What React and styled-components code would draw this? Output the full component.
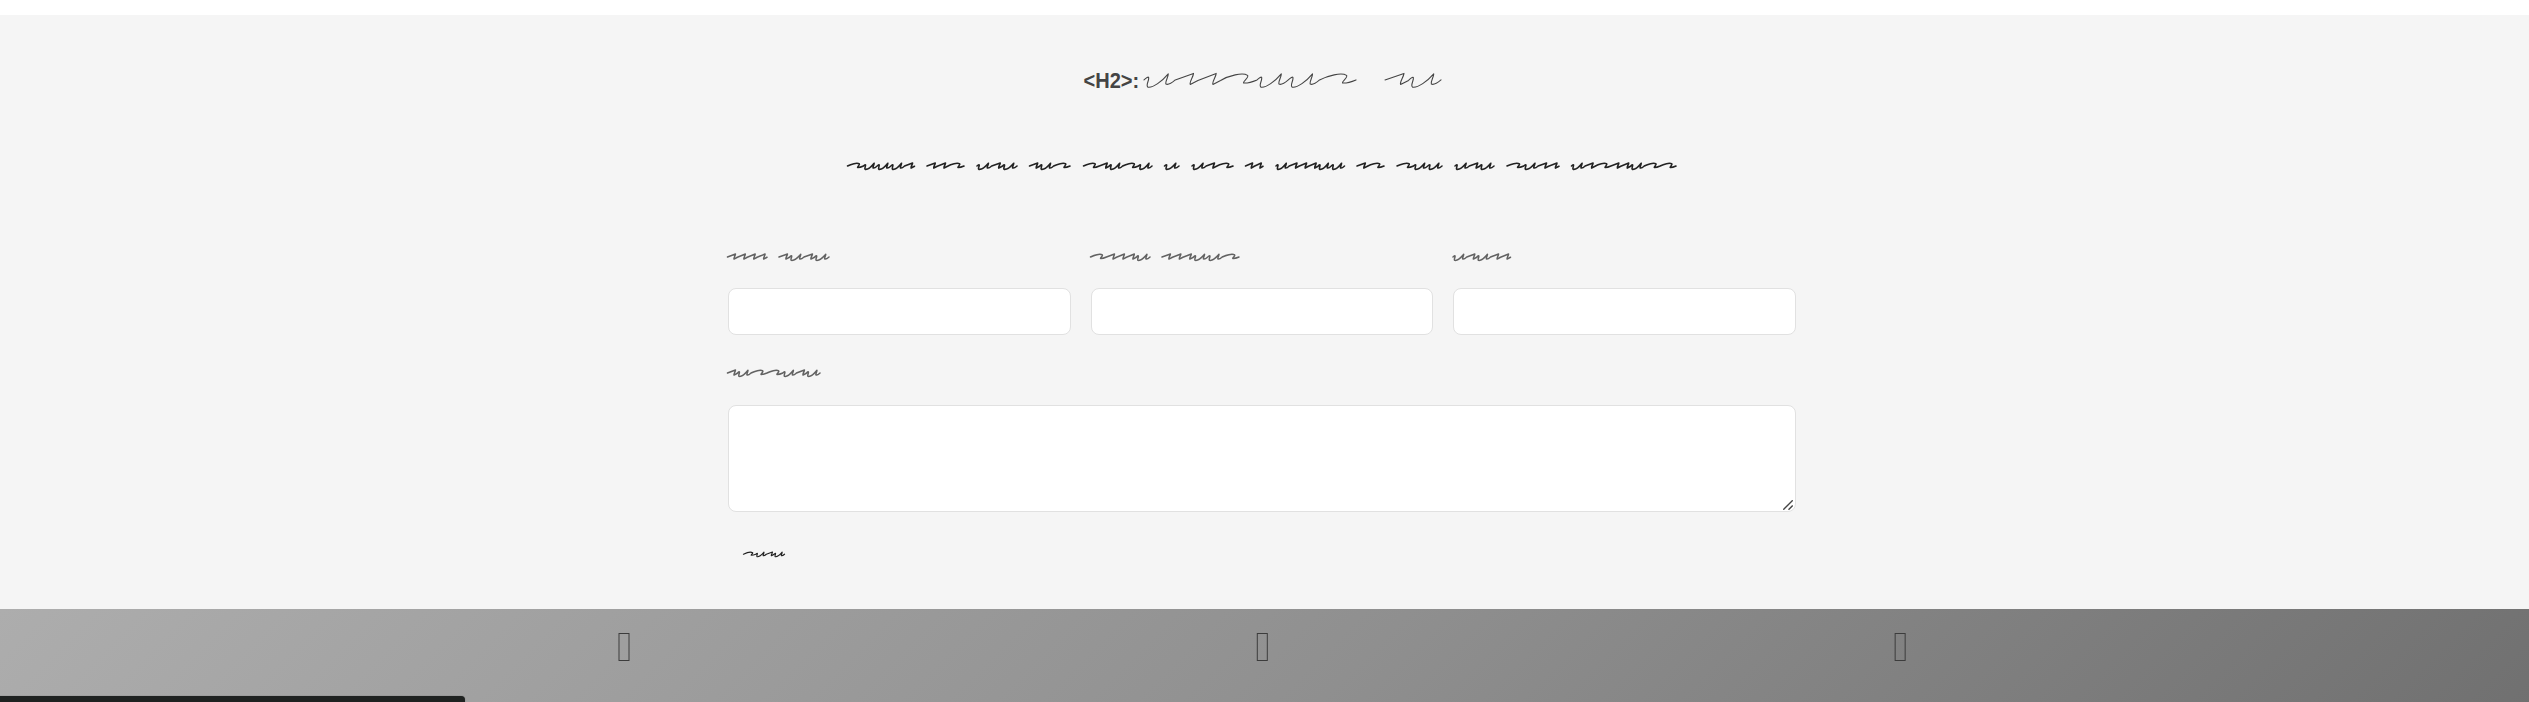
import React from "react";
import styled, { createGlobalStyle } from "styled-components";

const GlobalStyle = createGlobalStyle`
  *, *::before, *::after { box-sizing: border-box; }
  body { margin: 0; background: #fff; font-family: "Liberation Sans", Arial, sans-serif; overflow: hidden; }
`;

const Page = styled.div`
  height: 702px;
  padding-top: 15px;
  display: flex;
  flex-direction: column;
  overflow: hidden;
`;

const ContactSection = styled.section`
  flex: none;
  height: 594px;
  padding: 51px 5px 0 0;
  background: #f5f5f5;
  display: flex;
  flex-direction: column;
  align-items: center;
`;

const Heading = styled.h2`
  width: 358px;
  height: 30px;
  margin: 0;
  display: flex;
  align-items: center;
  color: #444;
  font-size: 22px;
  line-height: 30px;
  font-weight: 700;
`;

const Tag = styled.span`
  width: 56px;
  flex: none;
  white-space: nowrap;
  transform: translateX(0.5px) scaleX(0.91);
  transform-origin: left center;
`;

const Intro = styled.p`
  margin: 60px 0 0;
  height: 20px;
  display: flex;
`;

const Form = styled.form`
  width: 1068px;
  margin-top: 72px;
  display: flex;
  flex-direction: column;
`;

const FieldRow = styled.div`
  display: grid;
  grid-template-columns: repeat(3, 1fr);
  gap: 20px;
  margin-bottom: 30px;
`;

const Field = styled.label`
  display: flex;
  flex-direction: column;
`;

const LabelText = styled.span`
  height: 20px;
  margin-bottom: 20px;
  margin-left: -1px;
  display: flex;
`;

const Input = styled.input`
  width: 100%;
  height: 47px;
  padding: 8px 15px;
  border: 1px solid #e1e1e1;
  border-radius: 8px;
  background: #fff;
  outline: none;
`;

const TextAreaBox = styled.div`
  position: relative;
  height: 107px;
`;

const TextArea = styled.textarea`
  display: block;
  width: 100%;
  height: 107px;
  padding: 15px;
  border: 1px solid #e1e1e1;
  border-radius: 8px;
  background: #fff;
  outline: none;
  resize: none;
`;

const ResizeGrip = styled.svg`
  position: absolute;
  right: 3px;
  bottom: 2px;
  fill: none;
  stroke: #444;
  stroke-width: 1.4;
`;

const SendButton = styled.button`
  align-self: flex-start;
  margin-top: 31px;
  padding: 0 15px;
  height: 20px;
  border: 0;
  background: transparent;
  display: flex;
`;

const Scrawl = styled.svg`
  display: block;
  flex: none;
  overflow: visible;
  fill: none;
  stroke: ${(p) => p.$color};
  stroke-width: ${(p) => p.$weight};
  stroke-linecap: round;
  stroke-linejoin: round;
`;

const Footer = styled.footer`
  flex: none;
  height: 186px;
  padding: 24px 5px 0 0;
  background: linear-gradient(135deg, #adadad 0%, #8f8f8f 52%, #6e6e6e 100%);
  display: flex;
  justify-content: center;
`;

const FooterColumn = styled.div`
  width: 638px;
  display: flex;
  justify-content: center;
`;

const StatusBar = styled.div`
  position: fixed;
  left: 0;
  bottom: 0;
  width: 465px;
  height: 6px;
  background: #1f2221;
  border-top-right-radius: 4px;
  box-shadow: 0 0 1px rgba(0, 0, 0, 0.5);
`;

// Pen strokes: a = hooked loop, b = slanted peak, c = long wave.
const STROKES = {
  a: { width: 31.3, draw: (X, Y) => `Q${X(4)} ${Y(3)} ${X(4.6)} ${Y(4)} C${X(5.5)} ${Y(7)} ${X(1.2)} ${Y(12)} ${X(4)} ${Y(13.8)} C${X(9)} ${Y(14.6)} ${X(18)} ${Y(8)} ${X(24.3)} ${Y(0.5)} C${X(24)} ${Y(5)} ${X(21)} ${Y(8)} ${X(22)} ${Y(10.7)} Q${X(25)} ${Y(12)} ${X(31.3)} ${Y(6.5)}` },
  b: { width: 22.7, draw: (X, Y) => `L${X(18.3)} ${Y(0)} C${X(18)} ${Y(4)} ${X(14)} ${Y(8)} ${X(15)} ${Y(11)} L${X(22.7)} ${Y(7)}` },
  c: { width: 36.5, draw: (X, Y) => `C${X(8)} ${Y(2.5)} ${X(22)} ${Y(-1.5)} ${X(27)} ${Y(2)} C${X(29)} ${Y(4)} ${X(22)} ${Y(8)} ${X(23)} ${Y(9.6)} Q${X(28)} ${Y(10)} ${X(36.5)} ${Y(6.5)}` },
};

function wordPath([start, end, strokes], scaleY, top) {
  const natural = [...strokes].reduce((sum, s) => sum + STROKES[s].width, 0);
  const scaleX = (end - start) / natural;
  let offset = 0;
  let d = `M${start} ${top + 6.5 * scaleY}`;
  for (const s of strokes) {
    const base = offset;
    const X = (v) => (start + (base + v) * scaleX).toFixed(2);
    const Y = (v) => (top + v * scaleY).toFixed(2);
    d += STROKES[s].draw(X, Y);
    offset += STROKES[s].width;
  }
  return d;
}

function Handwriting({ words, width, height = 20, top = 6, scale = 0.46, color = "#626262", weight = 1.5 }) {
  return (
    <Scrawl width={width} height={height} $color={color} $weight={weight} aria-hidden="true">
      {words.map((w) => <path key={w[0]} d={wordPath(w, scale, top)} />)}
    </Scrawl>
  );
}

const TITLE = [[5, 217, "abbcaac"], [246, 302, "ba"]];
const INTRO = [
  [0.5, 67.5, "caaab"], [80, 117, "bbc"], [130, 170, "aba"], [182.5, 223, "bac"],
  [236.5, 305, "cbaca"], [317.5, 332, "a"], [345, 386, "abc"], [398.5, 416, "bb"],
  [429, 497.5, "abbbaa"], [510, 537, "bc"], [550, 595, "caa"], [608, 647, "aba"],
  [660, 712, "cabb"], [724.5, 829, "abcbbacc"],
];
const FIELDS = [
  [[0.5, 40, "bbbb"], [52, 102, "baba"]],
  [[0.5, 60, "cbbba"], [72, 149, "bbbaac"]],
  [[1, 58.5, "ababb"]],
];
const MESSAGE = [[0.5, 93, "baccaba"]];
const SEND = [[0.5, 41.5, "caba"]];

function MissingIcon({ shift = 0 }) {
  return (
    <Scrawl width="12" height="28" $color="#3c3c3c" $weight={1} aria-hidden="true">
      <rect x={1 + shift} y="0.5" width="10" height="27" strokeLinejoin="miter" />
    </Scrawl>
  );
}

export default function App() {
  return (
    <>
      <GlobalStyle />
      <Page>
        <ContactSection>
          <Heading>
            <Tag>&lt;H2&gt;:</Tag>
            <Handwriting words={TITLE} width={302} height={30} top={7.4} scale={1} color="#444" weight={1.1} />
          </Heading>
          <Intro>
            <Handwriting words={INTRO} width={830} top={7} color="#222" weight={1.6} />
          </Intro>
          <Form onSubmit={(e) => e.preventDefault()}>
            <FieldRow>
              {FIELDS.map((words, i) => (
                <Field key={i}>
                  <LabelText><Handwriting words={words} width={150} /></LabelText>
                  <Input type="text" />
                </Field>
              ))}
            </FieldRow>
            <Field>
              <LabelText><Handwriting words={MESSAGE} width={95} top={5} /></LabelText>
              <TextAreaBox>
                <TextArea />
                <ResizeGrip width="10" height="10" aria-hidden="true">
                  <path d="M0.3 9.7L9.7 0.3M5.5 9.7L9.7 5.5" />
                </ResizeGrip>
              </TextAreaBox>
            </Field>
            <SendButton type="submit">
              <Handwriting words={SEND} width={42} top={9} scale={0.34} color="#222" weight={1.2} />
            </SendButton>
          </Form>
        </ContactSection>
        <Footer>
          <FooterColumn><MissingIcon /></FooterColumn>
          <FooterColumn><MissingIcon shift={0.3} /></FooterColumn>
          <FooterColumn><MissingIcon shift={0.15} /></FooterColumn>
        </Footer>
      </Page>
      <StatusBar />
    </>
  );
}
